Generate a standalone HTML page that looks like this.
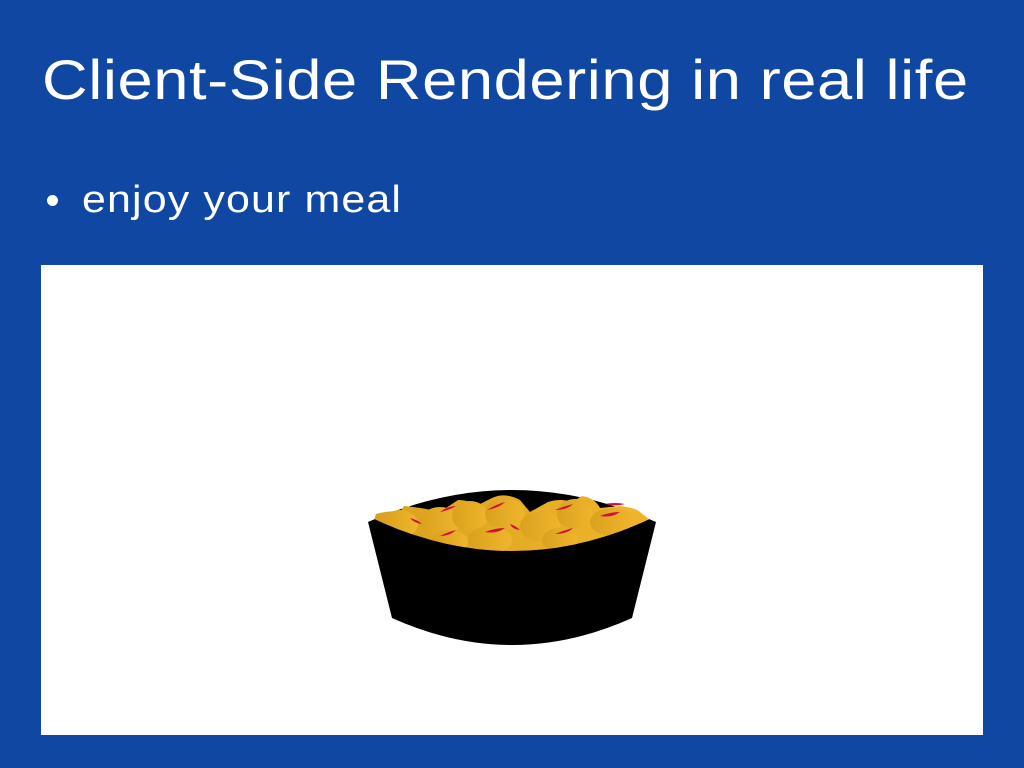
<!DOCTYPE html>
<html><head><style>
body{margin:0;width:1024px;height:768px;background:#0f47a2;overflow:hidden;font-family:"Liberation Sans",sans-serif;color:#fff;position:relative}
h1{position:absolute;left:42px;top:44px;margin:0;font-weight:normal;font-size:56px;letter-spacing:0.5px;white-space:nowrap;line-height:72px;transform:scaleX(1.13);transform-origin:0 0}
.b{position:absolute;left:82px;top:176px;font-size:38px;line-height:48px;letter-spacing:1px;transform:scaleX(1.13);transform-origin:0 0;white-space:nowrap}
.dot{position:absolute;left:47px;top:195px;width:11px;height:11px;border-radius:50%;background:#fff}
.box{position:absolute;left:41px;top:265px;width:942px;height:470px;background:#fff}
</style></head><body>
<h1>Client-Side Rendering in real life</h1>
<div class="dot"></div><div class="b">enjoy your meal</div>
<div class="box"></div>
<svg style="position:absolute;left:0;top:0" width="1024" height="768">
<defs><linearGradient id="g" x1="0" x2="1"><stop offset="0" stop-color="#d9a11d"/><stop offset="1" stop-color="#f0b52c"/></linearGradient></defs>
<path d="M368 522 Q512 458 656 522 L632 618 Q512 672 392 618 Z" fill="#000"/>
<clipPath id="c"><path d="M372 518 Q512 584 652 518 L652 480 L372 480Z"/></clipPath>
<g clip-path="url(#c)" fill="url(#g)">
<path d="M374 520 L376 514 Q390 510 400 512 L404 506 Q425 508 440 512 L458 500 Q470 500 476 506 L492 498 Q505 492 520 500 L530 512 L548 502 Q560 498 572 502 L582 496 Q595 498 600 508 L620 506 Q636 508 640 512 L650 520 L650 560 L374 560Z"/>
<ellipse cx="400" cy="524" rx="18" ry="14"/><ellipse cx="440" cy="522" rx="20" ry="15"/><ellipse cx="470" cy="516" rx="18" ry="15"/><ellipse cx="505" cy="514" rx="20" ry="16"/><ellipse cx="490" cy="540" rx="22" ry="14"/><ellipse cx="540" cy="526" rx="20" ry="15"/><ellipse cx="575" cy="514" rx="18" ry="15"/><ellipse cx="612" cy="522" rx="22" ry="14"/><ellipse cx="450" cy="542" rx="18" ry="12"/><ellipse cx="560" cy="540" rx="18" ry="12"/>
</g>
<g fill="#d0103a" clip-path="url(#c)">
<path d="M440 512 q8 -6 16 -6 q-6 4 -16 6z"/><path d="M487 510 q10 -6 18 -8 q-6 6 -18 8z"/><path d="M410 518 q8 2 12 6 q-8 -1 -12 -6z"/><path d="M485 532 q10 -4 20 -4 q-8 6 -20 4z"/><path d="M555 510 q10 -4 18 -6 q-6 6 -18 6z"/><path d="M600 516 q10 -4 20 -4 q-8 6 -20 4z"/><path d="M555 534 q10 -4 18 -6 q-6 6 -18 6z"/><path d="M440 536 q8 -4 16 -6 q-6 6 -16 6z"/><path d="M510 524 q6 2 10 6 q-8 -1 -10 -6z"/><path d="M605 504 q10 -2 20 0 q-10 3 -20 0z"/>
</g>
</svg>
</body></html>
